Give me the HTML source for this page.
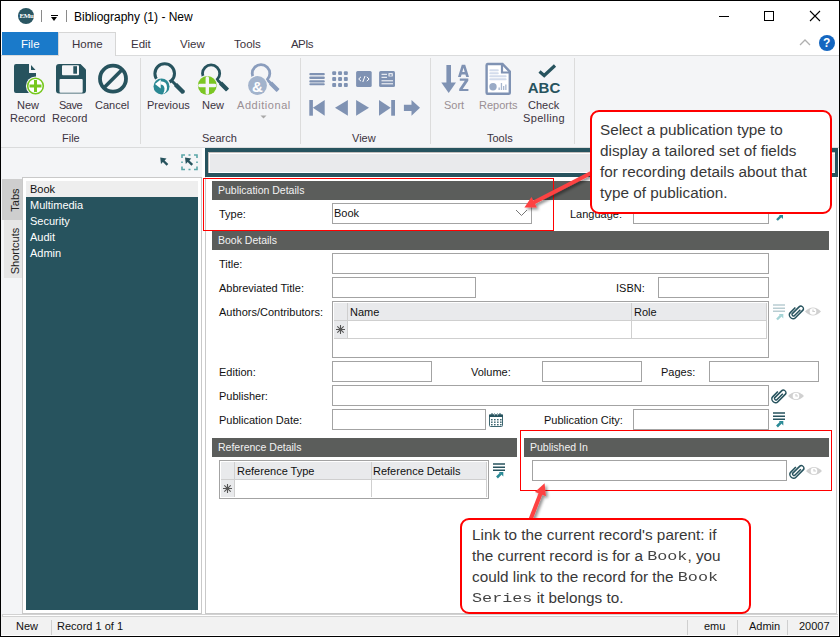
<!DOCTYPE html>
<html><head><meta charset="utf-8">
<style>
*{box-sizing:border-box;margin:0;padding:0}
html,body{width:840px;height:637px;overflow:hidden;background:#fff}
body{position:relative;font-family:"Liberation Sans",sans-serif;font-size:11px;color:#222}
.a{position:absolute}
.t{position:absolute;white-space:nowrap;line-height:1}
.rib{color:#3b3340}
.dis{color:#9a8f94}
.hdr{position:absolute;background:#5b5d5b;color:#f2f2f2;height:19px;font-size:11.5px;line-height:19px;padding-left:6px}
.inp{position:absolute;border:1px solid #a3a3a3;background:#fff}
.lbl{position:absolute;white-space:nowrap;font-size:11px;line-height:1;color:#111}
.callout{position:absolute;border:2px solid #f00;border-radius:9px;background:#fff;font-size:15.3px;line-height:21px;color:#222;padding:0}
.ct{position:absolute;white-space:nowrap;font-size:15.3px;line-height:21px;height:21px;color:#383838;z-index:11}
.mono{font-family:"Liberation Mono",monospace;font-size:16.8px;line-height:0;display:inline-block;transform:scaleY(0.8);transform-origin:0 100%;color:#444}
</style></head>
<body>
<!-- window border -->
<div class="a" style="left:0;top:0;width:840px;height:637px;border:1px solid #000;z-index:50;pointer-events:none"></div>

<!-- title bar -->
<div class="a" style="left:18px;top:8px;width:16px;height:16px;border-radius:50%;background:#2a5662"></div>
<div class="t" style="left:19.5px;top:12.5px;font-size:7px;color:#fff;font-weight:bold;letter-spacing:-0.4px;font-family:'Liberation Serif',serif">EMu</div>
<div class="a" style="left:41px;top:10px;width:1px;height:12px;background:#8a8a8a"></div>
<div class="a" style="left:51px;top:15px;width:7px;height:1px;background:#000"></div>
<div class="a" style="left:51px;top:17px;width:0;height:0;border-left:3.5px solid transparent;border-right:3.5px solid transparent;border-top:4px solid #000"></div>
<div class="a" style="left:66px;top:10px;width:1px;height:12px;background:#8a8a8a"></div>
<div class="t" style="left:74px;top:11px;font-size:12px;color:#000">Bibliography (1) - New</div>
<div class="a" style="left:719px;top:16px;width:10px;height:1px;background:#000"></div>
<div class="a" style="left:764px;top:11px;width:10px;height:10px;border:1px solid #000"></div>
<svg class="a" style="left:809px;top:10px" width="12" height="12"><path d="M1 1L11 11M11 1L1 11" stroke="#000" stroke-width="1.1"/></svg>

<!-- tab row -->
<div class="a" style="left:2px;top:32px;width:56px;height:23px;background:#1a7aca"></div>
<div class="t" style="left:21px;top:39px;font-size:11.5px;color:#fff">File</div>
<div class="a" style="left:58px;top:32px;width:58px;height:24px;background:#f4f5f7;border:1px solid #d6d6d6;border-bottom:none;z-index:2"></div>
<div class="t rib" style="left:72px;top:39px;font-size:11.5px;z-index:3">Home</div>
<div class="t rib" style="left:131px;top:39px;font-size:11.5px">Edit</div>
<div class="t rib" style="left:180px;top:39px;font-size:11.5px">View</div>
<div class="t rib" style="left:234px;top:39px;font-size:11.5px">Tools</div>
<div class="t rib" style="left:291px;top:39px;font-size:11.5px;letter-spacing:-0.6px">APIs</div>
<svg class="a" style="left:799px;top:38px" width="12" height="8"><path d="M1 7L6 2L11 7" stroke="#b0b0b0" stroke-width="1.3" fill="none"/></svg>
<div class="a" style="left:819px;top:35px;width:16px;height:16px;border-radius:50%;background:#1466c0"></div>
<div class="t" style="left:823px;top:37px;font-size:12px;font-weight:bold;color:#fff">?</div>

<!-- ribbon body -->
<div class="a" style="left:1px;top:55px;width:838px;height:93px;background:#f4f5f7;border-top:1px solid #dadbdc;border-bottom:1px solid #dadbdc"></div>
<div class="a" style="left:140px;top:58px;width:1px;height:86px;background:#dcdcdc"></div>
<div class="a" style="left:300px;top:58px;width:1px;height:86px;background:#dcdcdc"></div>
<div class="a" style="left:430px;top:58px;width:1px;height:86px;background:#dcdcdc"></div>
<div class="a" style="left:574px;top:58px;width:1px;height:86px;background:#dcdcdc"></div>

<!-- ribbon icons -->
<svg class="a" style="left:0;top:0;z-index:5" width="840" height="150">
 <!-- New Record -->
 <path d="M16 64H29V73H36V91Q36 93 34 93H16Q14 93 14 91V66Q14 64 16 64Z" fill="#27535e"/>
 <path d="M31 65L35.5 70H31Z" fill="#27535e"/>
 <circle cx="35.5" cy="86" r="9.6" fill="#f4f5f7"/>
 <circle cx="35.5" cy="86" r="7.8" fill="#fff" stroke="#76c81e" stroke-width="1.6"/>
 <path d="M35.5 80V92M29.5 86H41.5" stroke="#76c81e" stroke-width="3"/>
 <!-- Save -->
 <path d="M59 64H80.5L86 69.5V90.5Q86 93.5 83 93.5H59Q56 93.5 56 90.5V67Q56 64 59 64Z" fill="#27535e"/>
 <rect x="62" y="65.3" width="17" height="10" rx="1" fill="#f4f5f7"/>
 <rect x="73.3" y="66.2" width="3.7" height="7.5" fill="#27535e"/>
 <rect x="59.5" y="79" width="23.2" height="13.8" rx="1" fill="#f4f5f7"/>
 <!-- Cancel -->
 <circle cx="113" cy="78.7" r="13" fill="none" stroke="#27535e" stroke-width="3.8"/>
 <path d="M122 69.7L104 87.7" stroke="#27535e" stroke-width="3.6"/>
 <!-- Previous -->
 <circle cx="164.7" cy="73.5" r="9.8" fill="none" stroke="#27535e" stroke-width="3"/>
 <path d="M171 80L184 93" stroke="#27535e" stroke-width="3"/>
 <path d="M175.5 84.5L183.5 92.5" stroke="#27535e" stroke-width="4.5"/>
 <circle cx="161.5" cy="86.4" r="9.3" fill="#f4f5f7"/>
 <circle cx="161.5" cy="86.4" r="8" fill="#2a8893"/>
 <g transform="translate(161.5 86.4)"><path d="M-6.5 -2.3L-0.8 -7V2.2Z" fill="#fff"/><path d="M-1 -5.2Q5.5 -5.2 5.5 1Q5.5 5.5 1.5 7.6Q3.2 4.5 3 2Q2.5 -1.8 -1 -1.8Z" fill="#fff"/></g>
 <!-- New search -->
 <circle cx="211.1" cy="73.5" r="8.6" fill="none" stroke="#27535e" stroke-width="2.8"/>
 <path d="M216.5 79L227.5 90" stroke="#27535e" stroke-width="2.8"/>
 <path d="M220.5 83L227.5 90" stroke="#27535e" stroke-width="4.2"/>
 <circle cx="207.3" cy="85.5" r="10.6" fill="#f4f5f7"/>
 <circle cx="207.3" cy="85.5" r="9.4" fill="#7bc623"/>
 <path d="M207.3 78V93M199.8 85.5H214.8" stroke="#f4f5f7" stroke-width="3.4" stroke-linecap="round"/>
 <!-- Additional -->
 <circle cx="261" cy="73.5" r="8.8" fill="none" stroke="#8a9dbd" stroke-width="2.8"/>
 <path d="M266.5 79L278 90.5" stroke="#8a9dbd" stroke-width="2.8"/>
 <path d="M270.5 83L278 90.5" stroke="#8a9dbd" stroke-width="4.2"/>
 <circle cx="257.5" cy="85.5" r="10.6" fill="#f4f5f7"/>
 <circle cx="257.5" cy="85.5" r="9.4" fill="#a2b3cc"/>
 <text x="257.5" y="92" font-family="Liberation Sans" font-weight="bold" font-size="15" fill="#fff" text-anchor="middle">&amp;</text>
 <path d="M260.5 115.5H266.5L263.5 118.5Z" fill="#a8a8a8"/>
 <!-- View icons -->
 <g fill="#7f92b3">
  <rect x="309.3" y="73" width="15.5" height="2.3" rx="1"/>
  <rect x="309.3" y="76.6" width="15.5" height="2.3" rx="1"/>
  <rect x="309.3" y="80.2" width="15.5" height="2.3" rx="1"/>
  <rect x="309.3" y="83.2" width="15.5" height="2.1" rx="1"/>
  <rect x="332.2" y="71.2" width="3.9" height="3.9" rx="1"/><rect x="338.1" y="71.2" width="3.9" height="3.9" rx="1"/><rect x="343.9" y="71.2" width="3.9" height="3.9" rx="1"/>
  <rect x="332.2" y="77.1" width="3.9" height="3.9" rx="1"/><rect x="338.1" y="77.1" width="3.9" height="3.9" rx="1"/><rect x="343.9" y="77.1" width="3.9" height="3.9" rx="1"/>
  <rect x="332.2" y="83" width="3.9" height="3.9" rx="1"/><rect x="338.1" y="83" width="3.9" height="3.9" rx="1"/><rect x="343.9" y="83" width="3.9" height="3.9" rx="1"/>
  <rect x="356.1" y="71.1" width="15.6" height="15.8" rx="1.5"/>
  <rect x="379.1" y="71.1" width="15.9" height="15.8" rx="1.5"/>
  <!-- nav -->
  <rect x="309.3" y="100" width="3.6" height="15.7"/>
  <path d="M312.9 107.85L324.7 100V115.7Z"/>
  <path d="M335 107.85L347.9 100V115.7Z"/>
  <path d="M369 107.85L356.1 100V115.7Z"/>
  <path d="M390.7 107.85L379 100V115.7Z"/>
  <rect x="391.2" y="100" width="3.8" height="15.7"/>
  <path d="M403.9 104.7H411.5V100L420 107.85L411.5 115.7V111H403.9Z"/>
 </g>
 <g stroke="#fff" fill="none" stroke-width="1">
  <path d="M361 76.8L358.7 79L361 81.2M366.8 76.8L369.1 79L366.8 81.2M362.8 82L365 76"/>
  <path d="M381.5 74.3H387M381.5 77.3H387M381.5 80.8H393M381.5 83.8H393"/>
 </g>
 <rect x="388.5" y="73.2" width="4.2" height="3.2" fill="#fff"/>
 <rect x="389.5" y="74.2" width="2.2" height="1.6" fill="#7f92b3"/>
 <!-- Sort -->
 <g fill="#7f92b3">
  <rect x="446.4" y="65" width="4.6" height="18"/>
  <path d="M441.3 82.6H456L448.7 93Z"/>
 </g>
 <path fill-rule="evenodd" d="M458 77L461.8 64.8H465.2L469 77H466.2L465.4 74.4H461.6L460.8 77ZM462.3 72.1H464.7L463.5 67.8Z" fill="#7f92b3"/>
 <path d="M459.8 78.5H468.3V80.7L462.7 88.9H468.4V91.1H459.2V88.9L464.8 80.7H459.8Z" fill="#7f92b3"/>
 <!-- Reports -->
 <path d="M487.5 64H502.5L509.8 71.6V92.5Q509.8 93.8 508.5 93.8H487.5Q486.6 93.8 486.6 92.5V65.3Q486.6 64 487.5 64Z" fill="#fff" stroke="#7f92b3" stroke-width="2.4"/>
 <path d="M502 64.5V72.5H509.5" fill="none" stroke="#7f92b3" stroke-width="2.2"/>
 <g fill="#d3dcec">
  <rect x="489.3" y="69.3" width="9.5" height="2" rx="1"/>
  <rect x="489.3" y="72.3" width="9.5" height="2" rx="1"/>
  <rect x="489.3" y="75.3" width="17.3" height="2" rx="1"/>
  <rect x="489.3" y="78.3" width="17.3" height="2" rx="1"/>
 </g>
 <circle cx="493" cy="86.7" r="3.7" fill="#9aabc6"/>
 <g fill="#a8b7cf"><rect x="498.5" y="87.5" width="1.3" height="2.5"/><rect x="500.8" y="83" width="1.3" height="7"/><rect x="503" y="86" width="1.3" height="4"/><rect x="505.2" y="84.5" width="1.3" height="5.5"/></g>
 <!-- Check spelling -->
 <path d="M539.5 71.5L544.2 75.5L555 65.5" fill="none" stroke="#27535e" stroke-width="3.2"/>
 <text x="544" y="92.7" font-family="Liberation Sans" font-weight="bold" font-size="15" fill="#27535e" text-anchor="middle">ABC</text>
</svg>
<div class="t rib" style="left:17px;top:100px;font-size:11px">New</div>
<div class="t rib" style="left:10px;top:113px;font-size:11px">Record</div>
<div class="t rib" style="left:59px;top:100px;font-size:11px;letter-spacing:-0.5px">Save</div>
<div class="t rib" style="left:52px;top:113px;font-size:11px">Record</div>
<div class="t rib" style="left:95px;top:100px;font-size:11px">Cancel</div>
<div class="t rib" style="left:147px;top:100px;font-size:11px">Previous</div>
<div class="t rib" style="left:202px;top:100px;font-size:11px">New</div>
<div class="t dis" style="left:237px;top:100px;font-size:11px;letter-spacing:0.55px">Additional</div>
<div class="t dis" style="left:444px;top:100px;font-size:11px">Sort</div>
<div class="t dis" style="left:479px;top:100px;font-size:11px">Reports</div>
<div class="t rib" style="left:528px;top:100px;font-size:11px">Check</div>
<div class="t rib" style="left:523px;top:113px;font-size:11px;letter-spacing:0.35px">Spelling</div>
<div class="t rib" style="left:62px;top:133px;font-size:11px">File</div>
<div class="t rib" style="left:202px;top:133px;font-size:11px">Search</div>
<div class="t rib" style="left:352px;top:133px;font-size:11px">View</div>
<div class="t rib" style="left:487px;top:133px;font-size:11px">Tools</div>


<!-- toolbar row -->
<div class="a" style="left:1px;top:148px;width:838px;height:488px;background:#f4f5f7"></div>
<svg class="a" style="left:155px;top:150px" width="50" height="25">
 <path d="M5.2 7.4L11.5 8.5L9.6 10.4L13.3 14.1L11.6 15.8L7.9 12.1L6 14Z" fill="#27535e"/>
 <path d="M30 7.4L36.3 8.5L34.4 10.4L38.1 14.1L36.4 15.8L32.7 12.1L30.8 14Z" fill="#27535e"/>
 <g stroke="#5aa6a8" stroke-width="1.6" fill="none">
  <path d="M27 8V5H30M39 5H42V8M42 16.5V19.5H39M30 19.5H27V16.5"/>
  <path d="M33.5 5H35.5M33.5 19.5H35.5M27 11.5V13M42 11.5V13"/>
 </g>
</svg>

<!-- vertical tabs -->
<div class="a" style="left:2px;top:179px;width:20px;height:41px;background:#cecece"></div>
<div class="a" style="left:4px;top:220px;width:18px;height:58px;background:#e6e6e6"></div>
<div class="t rib" style="left:15px;top:200px;font-size:11px;transform:translate(-50%,-50%) rotate(-90deg);color:#222">Tabs</div>
<div class="t rib" style="left:15px;top:250.5px;font-size:11px;transform:translate(-50%,-50%) rotate(-90deg);color:#222">Shortcuts</div>

<!-- left panel -->
<div class="a" style="left:22px;top:177px;width:180px;height:437px;background:#fff;border:1px solid #c9c9c9"></div>
<div class="a" style="left:26px;top:181px;width:172px;height:16px;background:#eeeeee"></div>
<div class="t" style="left:30px;top:184px;font-size:11px;color:#111">Book</div>
<div class="a" style="left:26px;top:197px;width:172px;height:413px;background:#27535e"></div>
<div class="t" style="left:30px;top:200px;font-size:11px;color:#fff">Multimedia</div>
<div class="t" style="left:30px;top:216px;font-size:11px;color:#fff">Security</div>
<div class="t" style="left:30px;top:232px;font-size:11px;color:#fff">Audit</div>
<div class="t" style="left:30px;top:248px;font-size:11px;color:#fff">Admin</div>

<!-- search bar -->
<div class="a" style="left:202px;top:148px;width:637px;height:466px;background:#fff"></div>
<div class="a" style="left:205px;top:148px;width:633px;height:29px;background:#27535e"></div>
<div class="a" style="left:208px;top:152px;width:627px;height:21px;background:#fff;border-left:1px solid #c4bfbd;border-top:1px solid #c4bfbd"></div>
<div class="a" style="left:210px;top:154px;width:625px;height:18px;background:#e9eaec"></div>

<!-- form area -->
<div class="a" style="left:205px;top:177px;width:632px;height:437px;background:#fff;border:1px solid #c9c9c9;border-top-color:#fff"></div>

<div class="hdr" style="left:212px;top:181px;width:617px;font-size:10.5px">Publication Details</div>
<div class="lbl" style="left:219px;top:209px">Type:</div>
<div class="inp" style="left:332px;top:203px;width:200px;height:21px"></div>
<div class="t" style="left:334px;top:208px;font-size:11px;color:#111">Book</div>
<svg class="a" style="left:515px;top:208px" width="14" height="10"><path d="M1 2L6.5 7.5L12 2" stroke="#777" stroke-width="1" fill="none"/></svg>
<div class="lbl" style="left:570px;top:209px">Language:</div>
<div class="inp" style="left:633px;top:203px;width:136px;height:21px"></div>

<div class="hdr" style="left:212px;top:231px;width:617px;font-size:10.5px">Book Details</div>
<div class="lbl" style="left:219px;top:259px">Title:</div>
<div class="inp" style="left:332px;top:253px;width:437px;height:21px"></div>
<div class="lbl" style="left:219px;top:283px">Abbreviated Title:</div>
<div class="inp" style="left:332px;top:277px;width:144px;height:21px"></div>
<div class="lbl" style="left:616px;top:283px">ISBN:</div>
<div class="inp" style="left:658px;top:277px;width:111px;height:21px"></div>
<div class="lbl" style="left:219px;top:307px">Authors/Contributors:</div>
<div class="inp" style="left:332px;top:301px;width:437px;height:57px"></div>
<div class="a" style="left:334px;top:303px;width:433px;height:17px;background:#e9eaec"></div>
<div class="a" style="left:334px;top:320px;width:433px;height:1px;background:#cfcfcf"></div>
<div class="a" style="left:334px;top:321px;width:13px;height:17px;background:#e9eaec"></div>
<div class="a" style="left:334px;top:338px;width:433px;height:1px;background:#cfcfcf"></div>
<div class="a" style="left:347px;top:303px;width:1px;height:35px;background:#cfcfcf"></div>
<div class="a" style="left:631px;top:303px;width:1px;height:35px;background:#cfcfcf"></div>
<div class="a" style="left:766px;top:303px;width:1px;height:36px;background:#cfcfcf"></div>
<div class="t" style="left:350px;top:307px;font-size:11px;color:#111">Name</div>
<div class="t" style="left:634px;top:307px;font-size:11px;color:#111">Role</div>

<div class="lbl" style="left:219px;top:367px">Edition:</div>
<div class="inp" style="left:332px;top:361px;width:100px;height:21px"></div>
<div class="lbl" style="left:471px;top:367px">Volume:</div>
<div class="inp" style="left:542px;top:361px;width:100px;height:21px"></div>
<div class="lbl" style="left:661px;top:367px">Pages:</div>
<div class="inp" style="left:709px;top:361px;width:110px;height:21px"></div>
<div class="lbl" style="left:219px;top:391px">Publisher:</div>
<div class="inp" style="left:332px;top:385px;width:437px;height:21px"></div>
<div class="lbl" style="left:219px;top:415px">Publication Date:</div>
<div class="inp" style="left:332px;top:409px;width:154px;height:21px"></div>
<div class="lbl" style="left:544px;top:415px">Publication City:</div>
<div class="inp" style="left:633px;top:409px;width:136px;height:21px"></div>

<div class="hdr" style="left:212px;top:438px;width:305px;font-size:10.5px">Reference Details</div>
<div class="inp" style="left:219px;top:460px;width:270px;height:39px"></div>
<div class="a" style="left:221px;top:462px;width:266px;height:17px;background:#e9eaec"></div>
<div class="a" style="left:221px;top:479px;width:266px;height:1px;background:#cfcfcf"></div>
<div class="a" style="left:221px;top:480px;width:13px;height:17px;background:#e9eaec"></div>
<div class="a" style="left:234px;top:462px;width:1px;height:35px;background:#cfcfcf"></div>
<div class="a" style="left:371px;top:462px;width:1px;height:35px;background:#cfcfcf"></div>
<div class="a" style="left:486px;top:462px;width:1px;height:35px;background:#cfcfcf"></div>
<div class="t" style="left:237px;top:466px;font-size:11px;color:#111">Reference Type</div>
<div class="t" style="left:373px;top:466px;font-size:11px;color:#111">Reference Details</div>

<div class="hdr" style="left:524px;top:438px;width:305px;font-size:10.5px">Published In</div>
<div class="inp" style="left:532px;top:460px;width:255px;height:21px"></div>


<!-- form icons -->
<svg class="a" style="left:0;top:0;z-index:6" width="840" height="637">
 <defs>
  <g id="clip"><path transform="scale(1.2 1)" d="M1.2 -4V4.5A1.2 1.2 0 0 1 -1.2 4.5V-5.5A2.1 2.1 0 0 1 3 -5.5V5.5A3 3 0 0 1 -3 5.5V-2" stroke="#27535e" stroke-width="1.3" fill="none"/></g>
  <g id="eye"><path d="M-8 0Q0 -8 8 0Q0 8 -8 0Z" fill="#d0d0d0"/><circle r="3.3" fill="#fff"/><path d="M0 -2V0H2" stroke="#d0d0d0" stroke-width="1.2" fill="none"/></g>
  <g id="asterisk"><path d="M0 -4.5V4.5M-4.5 0H4.5M-3.2 -3.2L3.2 3.2M3.2 -3.2L-3.2 3.2" stroke="#555" stroke-width="1.1"/></g>
 </defs>
 <!-- grid1 side icons (faded list) -->
 <g stroke="#b9cdd2" stroke-width="1.4"><path d="M773 305H785M773 308.3H785M773 311.3H785"/></g>
 <path d="M777 319.5L780.8 315.7" stroke="#a5d4d6" stroke-width="2.4"/><path d="M778.8 314H783.3V318.5Z" fill="#a5d4d6"/>
 <use href="#clip" x="796.5" y="311.5" transform="rotate(45 796.5 311.5)"/>
 <use href="#eye" x="813" y="311.5"/>
 <!-- publisher -->
 <use href="#clip" x="779" y="395.5" transform="rotate(45 779 395.5)"/>
 <use href="#eye" x="796" y="396"/>
 <!-- published in -->
 <use href="#clip" x="797" y="471" transform="rotate(45 797 471)"/>
 <use href="#eye" x="814" y="471"/>
 <!-- list icons dark -->
 <g stroke="#27535e" stroke-width="1.4"><path d="M773 413H785M773 416.3H785M773 419.3H785"/></g>
 <path d="M777 426.5L780.8 422.7" stroke="#2a8a96" stroke-width="2.6"/><path d="M778.8 421H783.3V425.5Z" fill="#2a8a96"/>
 <g stroke="#27535e" stroke-width="1.4"><path d="M493 464H505M493 467.3H505M493 470.3H505"/></g>
 <path d="M497 477.5L500.8 473.7" stroke="#2a8a96" stroke-width="2.6"/><path d="M498.8 472H503.3V476.5Z" fill="#2a8a96"/>
 <!-- language list arrow partially visible -->
 <path d="M777 220L781 216" stroke="#2a8a96" stroke-width="2.4"/><path d="M779 215H783V219Z" fill="#2a8a96"/>
 <!-- calendar -->
 <rect x="489.5" y="415" width="13" height="11.5" rx="1" fill="#fff" stroke="#3d6670" stroke-width="1"/>
 <rect x="489" y="414.5" width="14" height="2.5" fill="#27535e"/>
 <g fill="#27535e"><rect x="491.5" y="413" width="1" height="2.5"/><rect x="499.5" y="413" width="1" height="2.5"/></g>
 <g fill="#9fb3b8"><rect x="494" y="413" width="1" height="2.5"/><rect x="497" y="413" width="1" height="2.5"/></g>
 <g fill="#3d6670">
  <rect x="491" y="419" width="1.6" height="1.4"/><rect x="494" y="419" width="1.6" height="1.4"/><rect x="497" y="419" width="1.6" height="1.4"/><rect x="500" y="419" width="1.6" height="1.4"/>
  <rect x="491" y="421.5" width="1.6" height="1.4"/><rect x="494" y="421.5" width="1.6" height="1.4"/><rect x="497" y="421.5" width="1.6" height="1.4"/><rect x="500" y="421.5" width="1.6" height="1.4"/>
  <rect x="491" y="424" width="1.6" height="1.4"/><rect x="494" y="424" width="1.6" height="1.4"/><rect x="497" y="424" width="1.6" height="1.4"/><rect x="500" y="424" width="1.6" height="1.4"/>
 </g>
 <use href="#asterisk" x="340.5" y="329.5"/>
 <use href="#asterisk" x="227.5" y="488.5"/>

 <!-- red highlight rects -->
 <rect x="203.5" y="178.5" width="350" height="52" fill="none" stroke="#f00" stroke-width="1"/>
 <rect x="520.5" y="430.5" width="311" height="60" fill="none" stroke="#f00" stroke-width="1"/>
</svg>

<!-- callouts -->
<div class="callout" style="left:590px;top:110px;width:242px;height:104px;z-index:10"></div>
<div class="ct" style="left:600px;top:119px">Select a publication type to</div>
<div class="ct" style="left:600px;top:140px">display a tailored set of fields</div>
<div class="ct" style="left:600px;top:161px">for recording details about that</div>
<div class="ct" style="left:600px;top:182px">type of publication.</div>
<div class="callout" style="left:460px;top:518px;width:291px;height:96px;z-index:10"></div>
<div class="ct" style="left:472px;top:524px">Link to the current record's parent: if</div>
<div class="ct" style="left:472px;top:545px">the current record is for a <span class="mono">Book</span>, you</div>
<div class="ct" style="left:472px;top:566px">could link to the record for the <span class="mono">Book</span></div>
<div class="ct" style="left:472px;top:587px"><span class="mono">Series</span> it belongs to.</div>

<!-- arrows -->
<svg class="a" style="left:0;top:0;z-index:9" width="840" height="637">
 <defs><filter id="sh" x="-50%" y="-50%" width="200%" height="200%"><feGaussianBlur in="SourceAlpha" stdDeviation="1.6"/><feOffset dx="2" dy="2"/><feComponentTransfer><feFuncA type="linear" slope="0.45"/></feComponentTransfer><feMerge><feMergeNode/><feMergeNode in="SourceGraphic"/></feMerge></filter></defs>
 <g filter="url(#sh)" fill="#fd4343">
  <path d="M591.1 170.7L533.3 200.6L531.5 197.1L524.4 207.4L536.9 207.6L535.1 204.1L592.9 174.3Z"/>
  <path d="M532.6 519.7L542.3 494.8L545.9 496.2L544.6 483.3L534.9 491.9L538.5 493.3L528.8 518.3Z"/>
 </g>
</svg>

<!-- status bar -->
<div class="a" style="left:1px;top:614px;width:838px;height:22px;background:#f2f2f2"></div>
<div class="a" style="left:2px;top:614px;width:836px;height:3px;background:#fff;border:1px solid #d2d2d2;border-right:none"></div>
<div class="a" style="left:838px;top:614px;width:1px;height:22px;background:#fff"></div>
<div class="a" style="left:1px;top:635px;width:838px;height:1px;background:#fff"></div>
<div class="t" style="left:16px;top:621px;font-size:11px;color:#111">New</div>
<div class="a" style="left:51px;top:620px;width:1px;height:15px;background:#cfcfcf"></div>
<div class="t" style="left:57px;top:621px;font-size:11px;color:#111">Record 1 of 1</div>
<div class="a" style="left:687px;top:620px;width:1px;height:15px;background:#cfcfcf"></div>
<div class="t" style="left:704px;top:621px;font-size:11px;color:#111">emu</div>
<div class="a" style="left:737px;top:620px;width:1px;height:15px;background:#cfcfcf"></div>
<div class="t" style="left:749px;top:621px;font-size:11px;color:#111">Admin</div>
<div class="a" style="left:787px;top:620px;width:1px;height:15px;background:#cfcfcf"></div>
<div class="t" style="left:799px;top:621px;font-size:11px;color:#111">20007</div>

</body></html>
